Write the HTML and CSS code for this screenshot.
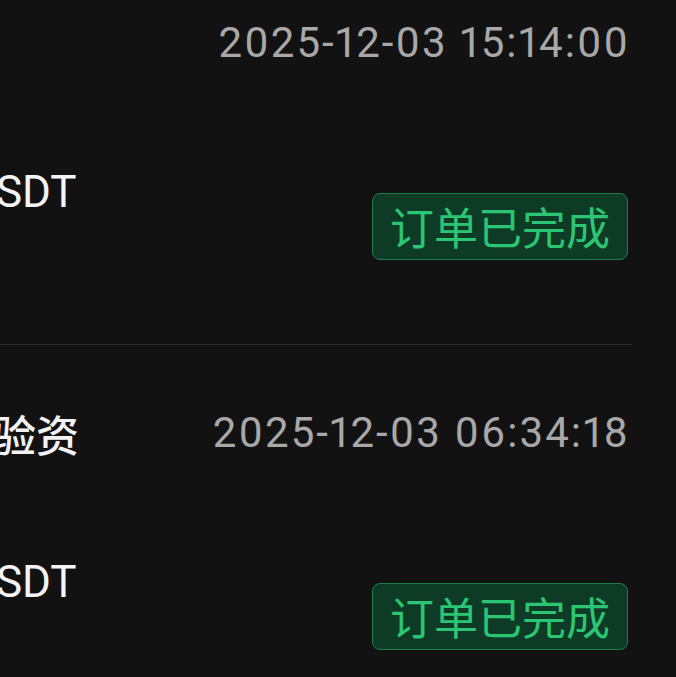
FILE: index.html
```html
<!DOCTYPE html>
<html lang="zh-CN">
<head>
<meta charset="utf-8">
<title>订单记录</title>
<link rel="stylesheet" href="styles.css">
</head>
<body>
<div class="list">
  <div class="item">
    <div class="row-top">
      <div class="title">充值</div>
      <div class="time">2025-12-03 15:14:00</div>
    </div>
    <div class="row-bottom">
      <div class="amount">20 USDT</div>
      <div class="badge">订单已完成</div>
    </div>
  </div>
  <div class="item">
    <div class="row-top">
      <div class="title">资金验资</div>
      <div class="time">2025-12-03 06:34:18</div>
    </div>
    <div class="row-bottom">
      <div class="amount">20 USDT</div>
      <div class="badge">订单已完成</div>
    </div>
  </div>
</div>
</body>
</html>
```
FILE: styles.css
```css
html, body {
  margin: 0;
  padding: 0;
  background: #121212;
  overflow: hidden;
}
body {
  width: 676px;
  height: 677px;
  font-family: Roboto, "Noto Sans CJK SC", sans-serif;
}
.list {
  margin-top: -45px;
  margin-left: -93px;
  width: 725px;
}
.item {
  padding: 58px 4px 84px 0;
  border-bottom: 1px solid #2c2c2c;
}
.row-top {
  display: flex;
  justify-content: space-between;
  align-items: center;
  height: 60px;
}
.title {
  font-family: "Noto Sans CJK SC", sans-serif;
  font-size: 43px;
  font-weight: 500;
  color: #f2f2f2;
  line-height: 60px;
}
.time {
  font-size: 42px;
  color: #a8a8a8;
  line-height: 60px;
  letter-spacing: 2.1px;
  margin-right: -2px;
  font-variant-numeric: proportional-nums;
}
.row-bottom {
  display: flex;
  justify-content: space-between;
  align-items: flex-start;
  margin-top: 89px;
}
.amount {
  font-size: 44px;
  font-weight: 400;
  color: #f4f4f4;
  line-height: 60px;
}
.badge {
  margin-top: 31px;
  height: 65px;
  line-height: 65px;
  padding: 0 17px;
  border: 1px solid #1f7f49;
  border-radius: 8px;
  background: #0e3b26;
  color: #2ac673;
  font-family: "Noto Sans CJK SC", sans-serif;
  font-size: 44px;
}
```
